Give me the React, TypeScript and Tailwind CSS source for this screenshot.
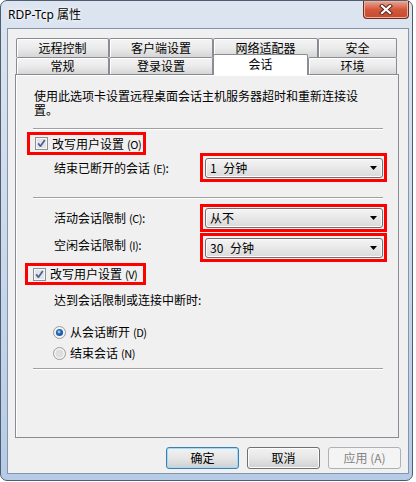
import type { ReactNode } from 'react';

const ROW1 = [
  { label: '远程控制',   w: 'w-[93px]' },
  { label: '客户端设置', w: 'w-[104px]' },
  { label: '网络适配器', w: 'w-[105px]' },
  { label: '安全',       w: 'w-[79px]' },
];

const ROW2 = [
  { label: '常规',     w: 'w-[93px]' },
  { label: '登录设置', w: 'w-[104px]' },
  { label: '会话',     w: 'w-[95px]', active: true },
  { label: '环境',     w: 'w-[89px]' },
];

function Tab({ label, w, active }: { label: string; w: string; active?: boolean }) {
  if (active) {
    return (
      <div className={`${w} h-[21px] -mb-px relative z-10 flex items-center justify-center pb-[3px] bg-white border border-b-0 border-[#898c95] rounded-t-[2px] leading-none`}>
        {label}
      </div>
    );
  }
  return (
    <div className={`${w} h-full flex items-center justify-center bg-linear-to-b from-[#f4f4f4] via-[#ebebeb] to-[#d6d6d6] border border-b-0 border-[#898c95] rounded-t-[2px] leading-none shadow-[inset_1px_1px_0_#fff]`}>
      {label}
    </div>
  );
}

// access key like "(O)" is drawn a bit smaller in the dialog
function Key({ k }: { k: string }) {
  return <span className="ml-[3px] text-[11px] tracking-[-0.5px]">({k})</span>;
}

function Sep({ className = '' }: { className?: string }) {
  return <div className={`ml-[17px] w-[350px] h-[2px] border-t border-t-[#a0a0a0] border-b border-b-white ${className}`} />;
}

function CheckBox() {
  return (
    <svg width="13" height="13" viewBox="0 0 13 13" className="shrink-0">
      <rect x="0.5" y="0.5" width="12" height="12" fill="#f6f6f6" stroke="#8e8f8f" />
      <rect x="2" y="2" width="9" height="9" fill="#e2e4e8" />
      <path d="M3.2 6.4 L5.4 9.2 L9.8 3" fill="none" stroke="#4a5f97" strokeWidth="1.7" strokeLinejoin="round" />
    </svg>
  );
}

function Radio({ checked }: { checked?: boolean }) {
  return (
    <svg width="13" height="13" viewBox="0 0 13 13" className="shrink-0">
      <circle cx="6.5" cy="6.5" r="6" fill="#f4f4f4" stroke="#9a9a9a" />
      {checked ? (
        <>
          <circle cx="6.5" cy="6.5" r="3.6" fill="#1f5fae" />
          <circle cx="6" cy="5.8" r="1.6" fill="#7cc3f2" />
        </>
      ) : (
        <circle cx="6.5" cy="6.5" r="4" fill="#dedede" />
      )}
    </svg>
  );
}

function Combo({ value }: { value: string }) {
  return (
    <div className="flex-1 h-[20px] flex items-center justify-between pl-[4px] pr-[5px] rounded-[3px] border border-[#707070] bg-linear-to-b from-[#f5f5f5] to-[#dadada] shadow-[inset_0_0_0_1px_#fbfbfb] leading-none">
      <span className="[word-spacing:4px]">{value}</span>
      <svg width="7" height="4" viewBox="0 0 7 4">
        <path d="M0 0h7L3.5 4z" fill="#000" />
      </svg>
    </div>
  );
}

function RedBox({ className, children }: { className: string; children: ReactNode }) {
  return <div className={`border-[3px] border-[#ff0000] flex items-center ${className}`}>{children}</div>;
}

function ComboRow({ label, k, value, className = '', labelClass = '' }: { label: string; k: string; value: string; className?: string; labelClass?: string }) {
  return (
    <div className={`flex items-center ${className}`}>
      <span className={`ml-[38px] w-[146px] leading-[14px] whitespace-nowrap ${labelClass}`}>
        {label}<Key k={k} />:
      </span>
      <RedBox className="w-[187px] h-full pl-[2px] pr-[1px]">
        <Combo value={value} />
      </RedBox>
    </div>
  );
}

function Btn({ children, kind = 'normal' }: { children: ReactNode; kind?: 'default' | 'normal' | 'disabled' }) {
  const look =
    kind === 'default'
      ? 'border-[#3c7fb1] bg-linear-to-b from-[#f2f2f2] via-[#e6e6e6] to-[#d0d0d0] shadow-[inset_0_0_0_1px_#9fdcf7]'
      : kind === 'disabled'
      ? 'border-[#adb2b5] bg-[#f4f4f4] text-[#838383]'
      : 'border-[#707070] bg-linear-to-b from-[#f2f2f2] via-[#e6e6e6] to-[#d0d0d0] shadow-[inset_0_0_0_1px_#fcfcfc]';
  return (
    <div className={`w-[73px] h-[22px] flex items-center justify-center rounded-[3px] border leading-none whitespace-nowrap ${look}`}>
      {children}
    </div>
  );
}

export default function App() {
  return (
    <div className="w-[416px] h-[482px] bg-white font-['Noto_Sans_CJK_SC','Noto_Sans',sans-serif] text-[12px] text-black">
      {/* Window frame */}
      <div className="w-[413px] h-[481px] flex flex-col pl-[6px] pr-[3px] pb-[6px] rounded-[7px] border border-[#4e5d70] bg-linear-to-b from-[#dce5f0] via-[#cbd9ea] to-[#b5cbe6]">
        {/* Title bar */}
        <div className="h-[27px] flex items-start">
          <span className="self-center ml-[1px] mt-[1px] text-[12px] leading-none font-['Noto_Sans','Noto_Sans_CJK_SC',sans-serif] [text-shadow:0_0_6px_#fff,0_0_3px_#fff]">
            RDP-Tcp 属性
          </span>
          <div className="ml-auto w-[46px] h-[18px] flex items-center justify-center rounded-b-[4px] border border-t-0 border-[#6d2b20] bg-linear-to-b from-[#e9a694] via-[#d2573c] to-[#c64a2c] shadow-[inset_0_0_0_1px_#efb09e]">
            <svg width="14" height="11" viewBox="0 0 14 11">
              <path d="M3 2 L11 9 M11 2 L3 9" stroke="#5a2a22" strokeWidth="4.2" strokeLinecap="square" />
              <path d="M3 2 L11 9 M11 2 L3 9" stroke="#fff" strokeWidth="2.2" strokeLinecap="square" />
            </svg>
          </div>
        </div>

        {/* Client area */}
        <div className="flex-1 flex flex-col pt-[9px] pl-[7px] pb-[4px] border border-[#8594a8] bg-[#f0f0f0]">
          {/* Tabs */}
          <div className="h-[36px] flex flex-col pl-[1px]">
            <div className="h-[19px] flex">
              {ROW1.map((t) => <Tab key={t.label} {...t} />)}
            </div>
            <div className="h-[17px] flex items-end">
              {ROW2.map((t) => <Tab key={t.label} {...t} />)}
            </div>
          </div>

          {/* Tab page */}
          <div className="w-[384px] h-[364px] flex flex-col border border-[#898c95] bg-[#f0f0f0] shadow-[inset_1px_1px_0_#fff]">
            <p className="mt-[14px] ml-[18px] leading-[14px]">
              使用此选项卡设置远程桌面会话主机服务器超时和重新连接设<br />置。
            </p>

            <Sep className="mt-[11px]" />

            <RedBox className="mt-[2px] ml-[11px] w-[119px] h-[23px] pl-[5px] gap-[4px] leading-none whitespace-nowrap">
              <CheckBox />
              <span>改写用户设置<Key k="O" /></span>
            </RedBox>

            <ComboRow label="结束已断开的会话" k="E" value="1 分钟" className="-mt-[2px] h-[29px]" />

            <Sep className="mt-[15px]" />

            <ComboRow label="活动会话限制" k="C" value="从不" className="mt-[5px] h-[28px]" />
            <ComboRow label="空闲会话限制" k="I" value="30 分钟" className="mt-[1px] h-[29px]" labelClass="mb-[5px]" />

            <RedBox className="mt-[1px] ml-[9px] w-[121px] h-[22px] pl-[5px] gap-[4px] leading-none whitespace-nowrap">
              <CheckBox />
              <span>改写用户设置<Key k="V" /></span>
            </RedBox>

            <p className="mt-[8px] ml-[38px] leading-[14px]">达到会话限制或连接中断时:</p>

            <div className="mt-[18px] ml-[37px] h-[14px] flex items-center gap-[4px] leading-none">
              <Radio checked />
              <span>从会话断开<Key k="D" /></span>
            </div>
            <div className="mt-[7px] ml-[37px] h-[14px] flex items-center gap-[4px] leading-none">
              <Radio />
              <span>结束会话<Key k="N" /></span>
            </div>

            <Sep className="mt-[8px]" />
          </div>

          {/* Buttons */}
          <div className="mt-[9px] flex justify-end gap-[8px] pr-[7px]">
            <Btn kind="default">确定</Btn>
            <Btn>取消</Btn>
            <Btn kind="disabled">应用 (A)</Btn>
          </div>
        </div>
      </div>
    </div>
  );
}
